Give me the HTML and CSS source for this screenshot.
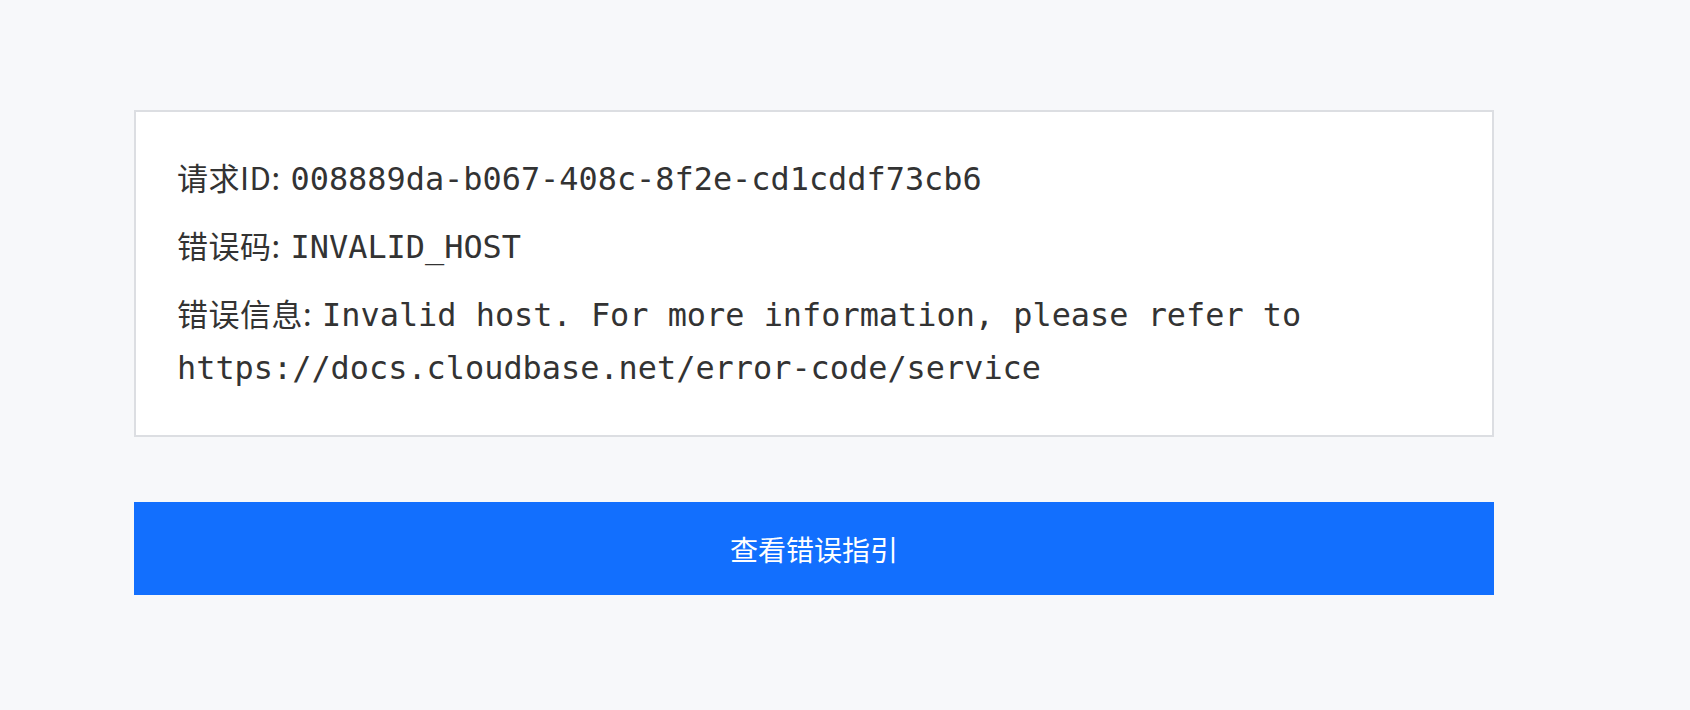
FILE: index.html
```html
<!DOCTYPE html>
<html lang="zh-CN">
<head>
<meta charset="utf-8">
<title>错误</title>
<link rel="stylesheet" href="styles.css">
</head>
<body>
<main class="page">
  <section class="card">
    <p class="row"><span class="label">请求ID:</span> <span class="mono">008889da-b067-408c-8f2e-cd1cddf73cb6</span></p>
    <p class="row"><span class="label">错误码:</span> <span class="mono">INVALID_HOST</span></p>
    <p class="row"><span class="label">错误信息:</span> <span class="mono">Invalid host. For more information, please refer to https://docs.cloudbase.net/error-code/service</span></p>
  </section>
  <a class="btn" href="#">查看错误指引</a>
</main>
</body>
</html>
```
FILE: styles.css
```css
html, body {
  margin: 0;
  padding: 0;
  background: #f7f8fa;
}
body {
  font-family: "Noto Sans CJK SC", "Noto Sans", sans-serif;
  color: #333333;
}
.page {
  width: 1360px;
  margin: 110px 0 0 134px;
  display: flex;
  flex-direction: column;
  gap: 65px;
}
.card {
  background: #ffffff;
  border: 2px solid #dcdee2;
  padding: 38px 41px 43px 41px;
  display: flex;
  flex-direction: column;
  gap: 15px;
}
.row {
  margin: 0;
  line-height: 53px;
  font-size: 31px;
}
.label {
  font-family: "Noto Sans CJK SC", "Noto Sans", sans-serif;
  font-size: 31px;
  letter-spacing: 0.5px;
  margin-right: 3px;
  line-height: 1;
}
.mono {
  font-family: "DejaVu Sans Mono", "Liberation Mono", monospace;
  font-size: 31.9px;
  color: #333333;
  line-height: 1;
}
.btn {
  display: flex;
  align-items: center;
  justify-content: center;
  height: 93px;
  background: #126ffe;
  color: #ffffff;
  text-decoration: none;
  font-size: 28px;
}
```
